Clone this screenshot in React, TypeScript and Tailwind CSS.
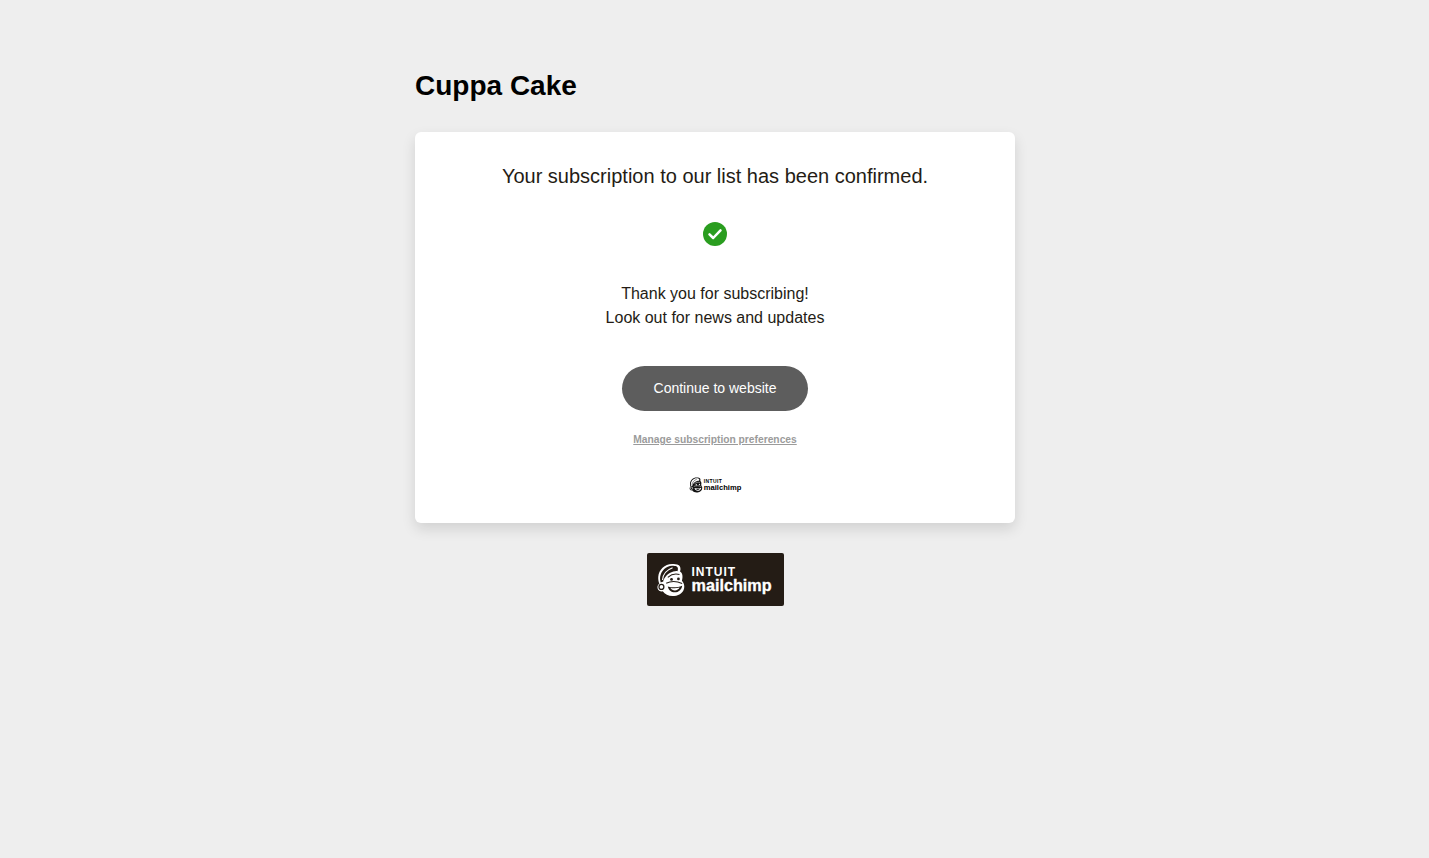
function Freddie({ className, ink, paper }: { className: string; ink: string; paper: string }) {
    return (
        <svg viewBox="0 0 28 32" className={className} aria-hidden="true">
            {/* outer silhouette */}
            <path
                d="M15 1C8 1 2.5 6.5 2 13c-.2 2.5.3 4.8 1 6.5C1.2 20.6.7 23 1.8 25c1 1.6 2.8 2.2 4.4 1.6C8.5 29.8 12.5 31.5 17 31c5.5-.6 9.5-4 9.5-9 0-2.2-1-4-2.2-5.3.5-2 .8-4 .2-6-.4-1.4-1.2-2.2-2-2.6 1-2.5.4-5.3-1.5-6.2C19.5 1.2 17 1 15 1z"
                fill={paper}
            />
            {/* cap */}
            <path
                d="M15 2.600C9.500 2.600 4.600 7.500 3.800 13c-.3 2 .1 3.800.6 5.300.6-.5 1.400-.8 2.200-.7 1-4.500 5-8.200 9.500-9.500 1.800-.5 3-.6 4-.4.8-2 .5-3.800-.7-4.400C18.300 2.700 16.600 2.600 15 2.600z"
                fill={ink}
            />
            <path d="M6 16c.4-5 4-9.500 9.500-11.500" fill="none" stroke={paper} strokeWidth="1" />
            {/* ear cup */}
            <circle cx="5" cy="22.5" r="2.3" fill="none" stroke={ink} strokeWidth="1.2" />
            {/* brow and eyes */}
            <path d="M11 13.5c3-2.600 7.500-3.600 11-2.600" fill="none" stroke={ink} strokeWidth="1" />
            <circle cx="14.5" cy="15.5" r="1.3" fill={ink} />
            <circle cx="21" cy="15" r="1.3" fill={ink} />
            {/* muzzle */}
            <path d="M9.5 19c4-2 10-2 15 .2" fill="none" stroke={ink} strokeWidth="1" />
            <path d="M11 22c4 1.400 9 1.200 13.500-.6-.4 3.800-3.400 6.200-7 6.200-3.200 0-5.800-2.200-6.500-5.600z" fill={ink} />
            <path d="M13.5 23.500c2.800.6 6 .5 8.600-.4-.8 1.700-2.500 2.700-4.400 2.700-1.800 0-3.400-.9-4.200-2.300z" fill={paper} />
        </svg>
    );
}

function App() {
    return (
        <div className="min-h-[858px] bg-[#eeeeee] pt-[69px] font-['Liberation_Sans',Arial,sans-serif]">
            <div className="ml-[415px] w-[600px]">
                <h1 className="text-[28px] leading-[34px] font-bold text-black">Cuppa Cake</h1>

                <main className="mt-[29px] flex h-[391px] flex-col items-center rounded-md bg-white pt-[30px] shadow-[0_6px_14px_rgba(0,0,0,0.12)]">
                    <p className="text-[20px] leading-[28px] text-[#241c15]">
                        Your subscription to our list has been confirmed.
                    </p>

                    <svg viewBox="0 0 24 24" className="mt-[32px] h-6 w-6" aria-hidden="true">
                        <circle cx="12" cy="12" r="12" fill="#2a9d1f" />
                        <path
                            d="M6.5 12.3l3.700 3.700 7.300-7.600"
                            fill="none"
                            stroke="#ffffff"
                            strokeWidth="2.5"
                            strokeLinecap="round"
                            strokeLinejoin="round"
                        />
                    </svg>

                    <p className="mt-[36px] text-center text-base leading-6 text-[#241c15]">
                        Thank you for subscribing!
                        <br />
                        Look out for news and updates
                    </p>

                    <a
                        href="#"
                        className="mt-[36px] flex h-[45px] w-[186px] items-center justify-center rounded-full bg-[#5d5d5d] pb-px text-sm text-white"
                    >
                        Continue to website
                    </a>

                    <a href="#" className="mt-[22px] text-[10.25px] leading-[14px] font-bold text-[#9b9b9b] underline">
                        Manage subscription preferences
                    </a>

                    <div className="mt-[30px] flex items-center gap-px">
                        <Freddie className="h-[16px] w-[14px]" ink="#ffffff" paper="#111111" />
                        <div className="flex flex-col text-black">
                            <span className="text-[5px] leading-[5px] font-bold tracking-[0.4px]">INTUIT</span>
                            <span className="text-[7.6px] leading-[7px] font-bold">mailchimp</span>
                        </div>
                    </div>
                </main>

                <div className="mt-[30px] flex justify-center">
                    <div className="flex h-[53px] w-[137px] items-center gap-[6px] rounded-[2px] bg-[#241c15] pl-[9px] text-white">
                        <Freddie className="h-[34px] w-[30px]" ink="#241c15" paper="#ffffff" />
                        <div className="flex flex-col">
                            <span className="text-[12px] leading-[11px] font-bold tracking-[1px]">INTUIT</span>
                            <span className="text-[16.2px] leading-[14px] font-bold [-webkit-text-stroke:0.3px_white]">
                                mailchimp
                            </span>
                        </div>
                    </div>
                </div>
            </div>
        </div>
    );
}

export default App;
